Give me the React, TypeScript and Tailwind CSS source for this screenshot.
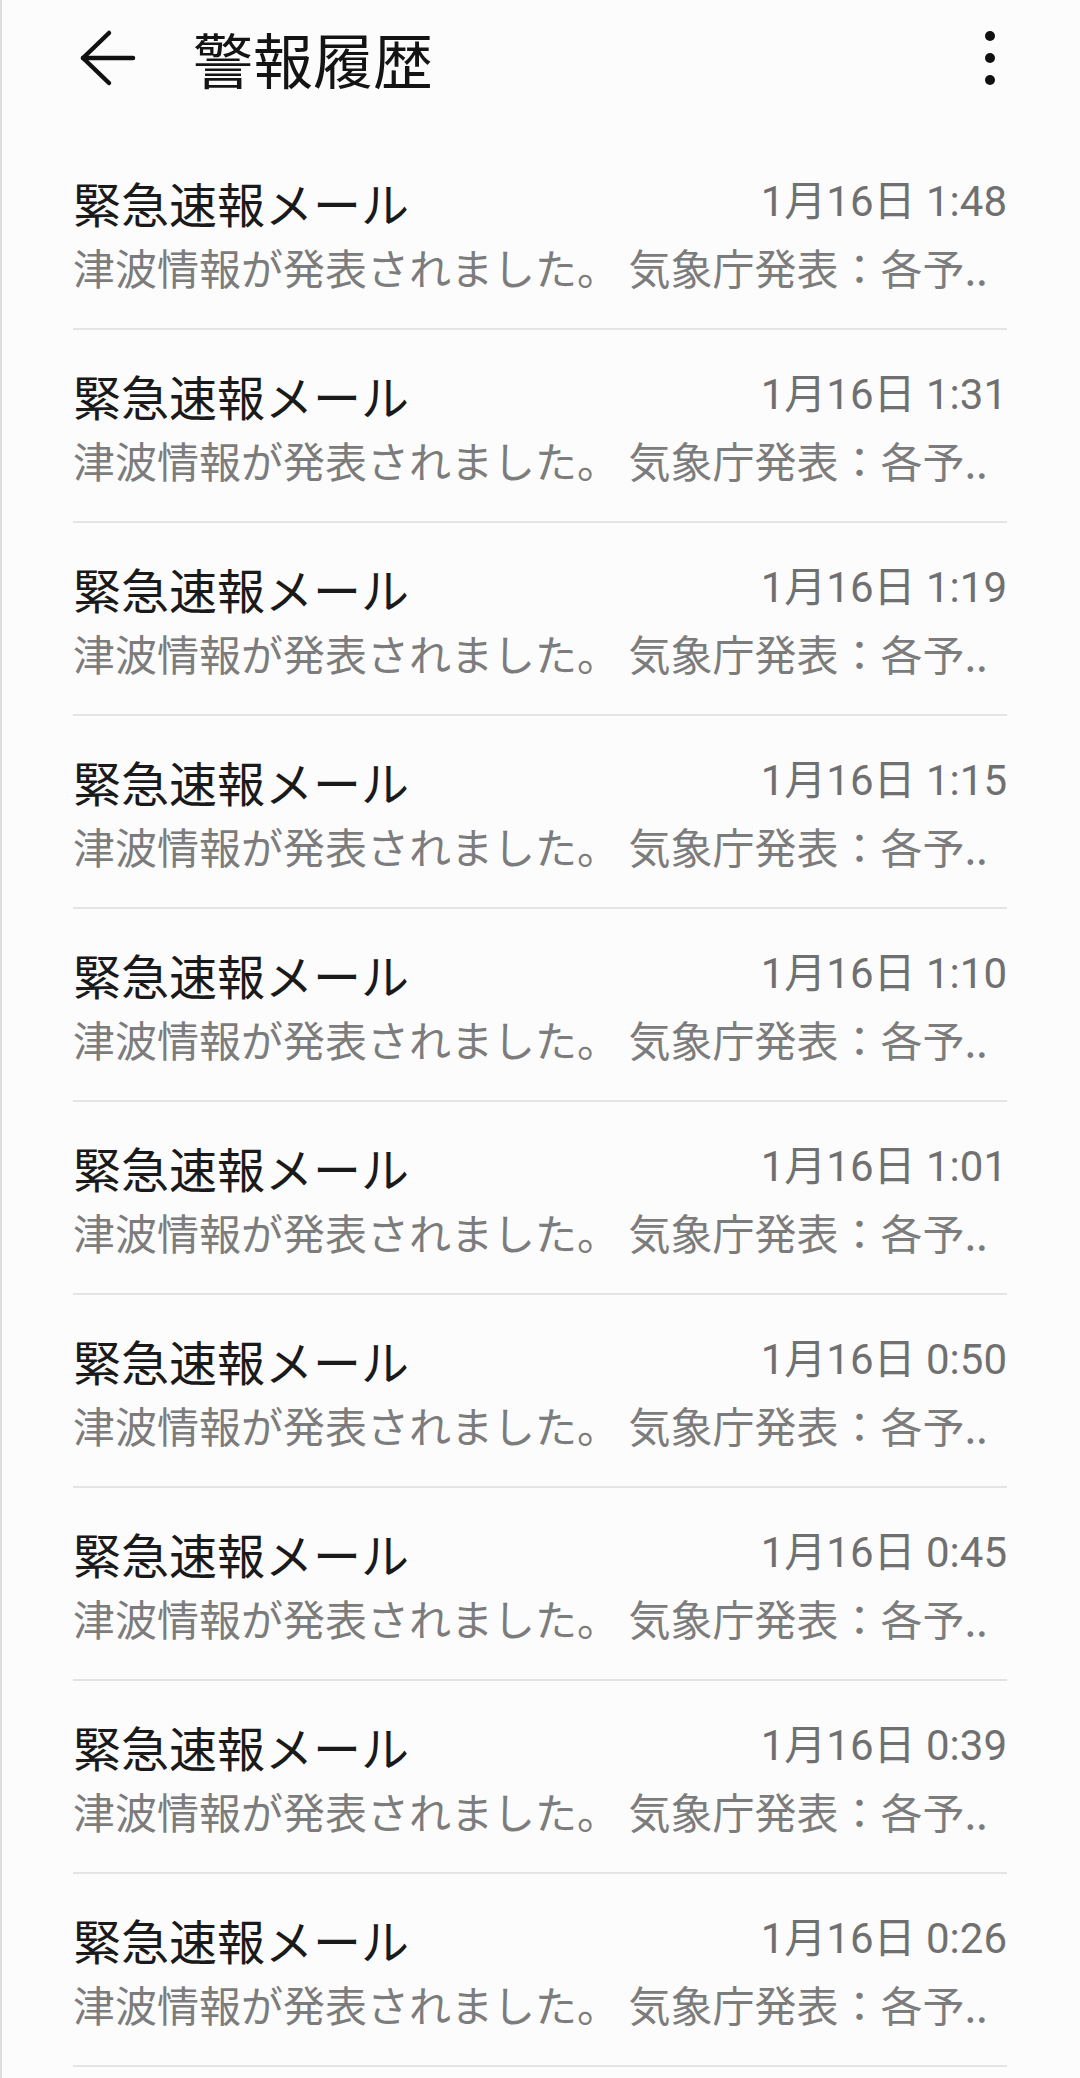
const times = ["1:48", "1:31", "1:19", "1:15", "1:10", "1:01", "0:50", "0:45", "0:39", "0:26"];

function AlertRow({ time }: { time: string }) {
  return (
    <div className="border-b-2 border-[#e4e4e4] pt-[36px] pb-[37px]">
      <div className="flex items-center justify-between">
        <span className="text-[48px] leading-[58px] text-[#1a1a1a]">緊急速報メール</span>
        <span className="font-['Roboto','Noto_Sans_CJK_JP',sans-serif] text-[42px] leading-[58px] text-[#707070]">
          1月16日 {time}
        </span>
      </div>
      <p className="mt-[12px] whitespace-nowrap text-[42px] leading-[48px] text-[#7c7c7c]">
        津波情報が発表されました。 気象庁発表：各予..
      </p>
    </div>
  );
}

export default function App() {
  return (
    <div className="min-h-screen border-l-2 border-[#dedede] bg-[#fcfcfc] font-['Noto_Sans_CJK_JP',sans-serif]">
      {/* Header */}
      <header className="flex h-[116px] items-center justify-between pl-[76px] pr-[85px]">
        <div className="flex items-center">
          <svg width="60" height="60" viewBox="0 0 60 60" fill="none" stroke="#111" strokeWidth="4.5" strokeLinecap="round" strokeLinejoin="round">
            <path d="M5 30H55" />
            <path d="M31 5L5 30L31 55" />
          </svg>
          <h1 className="ml-[55px] text-[60px] leading-none text-[#141414]">警報履歴</h1>
        </div>
        <div className="flex flex-col gap-[12px]">
          <span className="h-[10px] w-[10px] rounded-full bg-[#111]" />
          <span className="h-[10px] w-[10px] rounded-full bg-[#111]" />
          <span className="h-[10px] w-[10px] rounded-full bg-[#111]" />
        </div>
      </header>

      {/* List */}
      <div className="mt-[21px] pl-[71px] pr-[73px]">
        {times.map((t) => (
          <AlertRow key={t} time={t} />
        ))}
      </div>
    </div>
  );
}
